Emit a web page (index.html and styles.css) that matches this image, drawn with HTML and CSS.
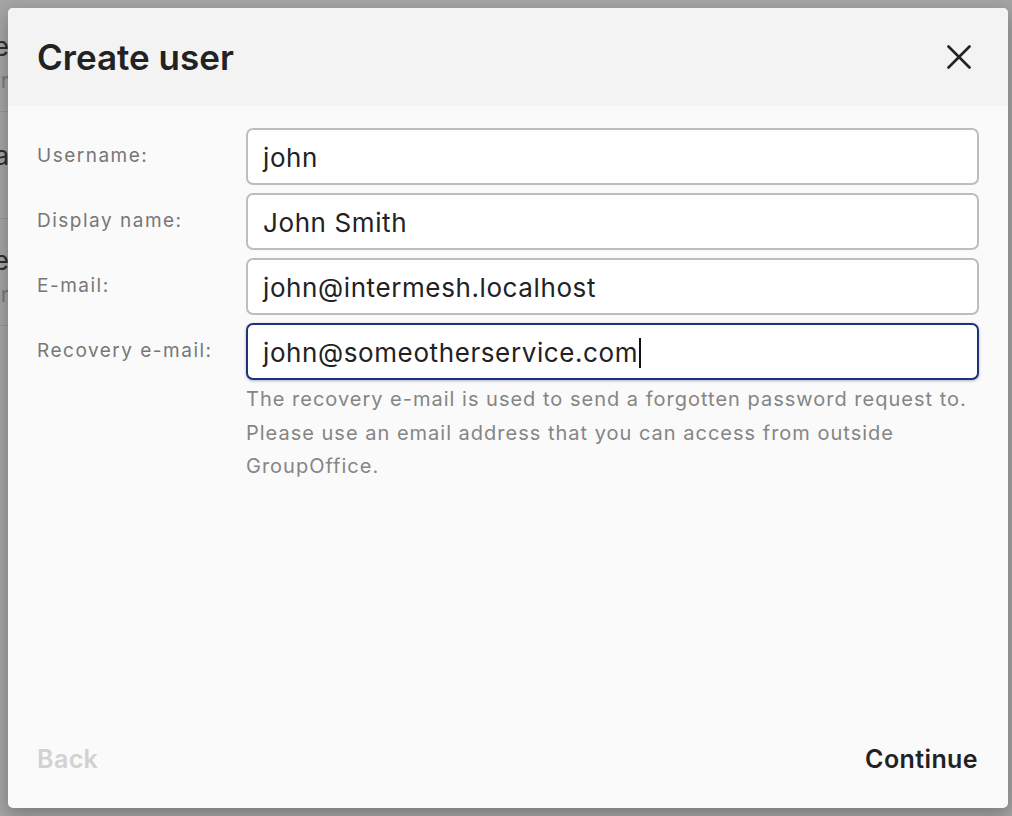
FILE: index.html
```html
<!DOCTYPE html>
<html lang="en">
<head>
<meta charset="utf-8">
<title>Create user</title>
<link rel="stylesheet" href="styles.css">
</head>
<body>
<div class="page">
  <div class="bg-list">
    <div class="bg-row"><span class="bg-title">Recipe</span><span class="bg-sub">Chapter</span></div>
    <div class="bg-row"><span class="bg-title">Data</span></div>
    <div class="bg-row"><span class="bg-title">Service</span><span class="bg-sub">Helper</span></div>
  </div>
</div>
<div class="dialog" role="dialog" aria-labelledby="dlg-title">
  <div class="dialog-header">
    <h1 id="dlg-title" class="dialog-title">Create user</h1>
    <button class="close-btn" aria-label="Close">
      <svg width="24" height="24" viewBox="0 0 24 24"><path d="M1.5 1.5 L22.5 22.5 M22.5 1.5 L1.5 22.5" stroke="#222" stroke-width="2.6" fill="none" stroke-linecap="round"/></svg>
    </button>
  </div>
  <div class="dialog-body">
    <div class="form">
      <label class="label">Username:</label>
      <div class="field"><div class="input">john</div></div>
      <label class="label">Display name:</label>
      <div class="field"><div class="input">John Smith</div></div>
      <label class="label">E-mail:</label>
      <div class="field"><div class="input">john@intermesh.localhost</div></div>
      <label class="label">Recovery e-mail:</label>
      <div class="field">
        <div class="input focused">john@someotherservice.com<span class="caret"></span></div>
        <p class="help">The recovery e-mail is used to send a forgotten password request to. Please use an email address that you can access from outside GroupOffice.</p>
      </div>
    </div>
  </div>
  <div class="dialog-footer">
    <button class="btn btn-back" disabled>Back</button>
    <button class="btn btn-continue">Continue</button>
  </div>
</div>
</body>
</html>
```
FILE: styles.css
```css
* { box-sizing: border-box; }
html, body {
  margin: 0;
  padding: 0;
  width: 1012px;
  height: 816px;
  overflow: hidden;
  font-family: Inter, "Noto Sans", sans-serif;
}
body { background: #a4a4a4; }

.page { width: 1012px; height: 816px; }
.bg-list {
  width: 9px;
  overflow: hidden;
  display: flex;
  flex-direction: column;
  padding-top: 5px;
}
.bg-row {
  height: 107px;
  border-bottom: 1px solid #969696;
  display: flex;
  flex-direction: column;
  align-items: flex-end;
  justify-content: flex-start;
  padding-top: 27px;
  gap: 5px;
  white-space: nowrap;
}
.bg-row:nth-child(2) { padding-top: 29px; }
.bg-title { font-size: 26px; color: #2e2e2e; line-height: 30px; }
.bg-sub { font-size: 22px; color: #7a7a7a; line-height: 26px; }

.dialog {
  position: absolute;
  left: 8px;
  top: 8px;
  width: 1000px;
  height: 800px;
  background: #fafafa;
  border-radius: 5px;
  box-shadow: 0 6px 18px rgba(0,0,0,0.28);
  display: flex;
  flex-direction: column;
  overflow: hidden;
}
.dialog-header {
  height: 98px;
  flex: none;
  background: #f3f3f3;
  display: flex;
  align-items: center;
  justify-content: space-between;
  padding: 0 37px 0 29px;
}
.dialog-title {
  margin: 0;
  font-size: 35px;
  font-weight: 600;
  color: #222;
  letter-spacing: 0;
}
.close-btn {
  border: 0;
  background: none;
  padding: 0;
  width: 24px;
  height: 24px;
  display: flex;
}

.dialog-body {
  flex: 1;
  padding: 22px 29px 0 29px;
}
.form {
  display: grid;
  grid-template-columns: 209px 1fr;
  row-gap: 8px;
}
.label {
  font-size: 19px;
  line-height: 55px;
  color: #777;
  letter-spacing: 1.5px;
}
.input {
  height: 57px;
  background: #fff;
  border: 2px solid #bdbdbd;
  border-radius: 7px;
  padding: 2px 15px 0 15px;
  display: flex;
  align-items: center;
  font-size: 26px;
  letter-spacing: 0.6px;
  color: #222;
}
.input.focused {
  border-color: #1f3477;
  box-shadow: 0 1px 3px rgba(31,52,119,0.35);
}
.caret {
  display: inline-block;
  width: 2px;
  height: 30px;
  background: #111;
  margin-left: 1px;
}
.help {
  margin: 3px 0 0 0;
  font-size: 20px;
  line-height: 33.5px;
  color: #858585;
  letter-spacing: 1px;
}

.dialog-footer {
  flex: none;
  display: flex;
  justify-content: space-between;
  align-items: center;
  padding: 0 30px 34px 29px;
}
.btn {
  border: 0;
  background: none;
  padding: 0;
  font-family: inherit;
  font-size: 25px;
  line-height: 30px;
  font-weight: 600;
  letter-spacing: 0.4px;
}
.btn-back { color: #d2d2d2; }
.btn-continue { color: #222; }
```
